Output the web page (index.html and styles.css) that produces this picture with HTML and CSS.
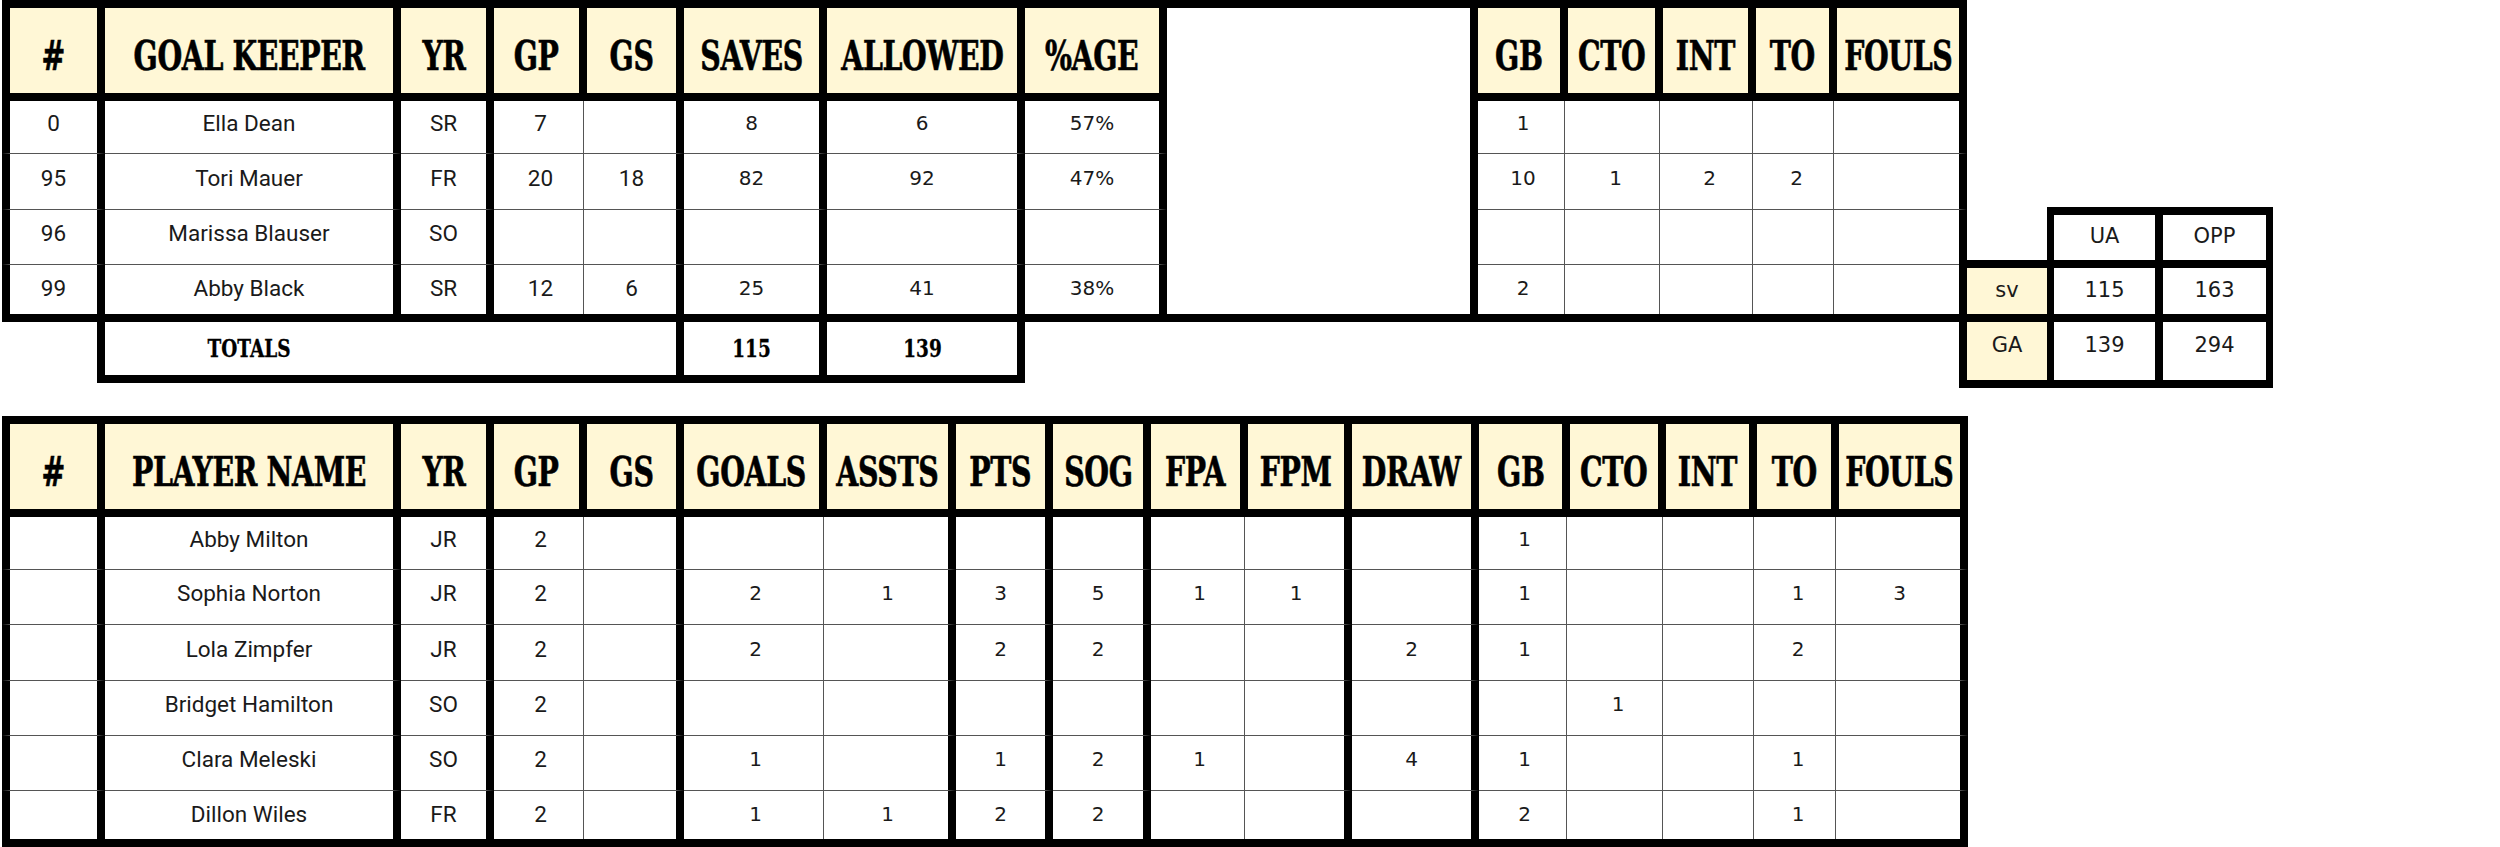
FILE: index.html
```html
<!DOCTYPE html>
<html>
<head>
<meta charset="utf-8">
<link rel="stylesheet" href="styles.css">
</head>
<body>
<div class="page">
  <div class="top">
    <div class="grid gk">
      <div class="c h first"><span>#</span></div>
      <div class="c h"><span>GOAL KEEPER</span></div>
      <div class="c h"><span>YR</span></div>
      <div class="c h"><span>GP</span></div>
      <div class="c h"><span>GS</span></div>
      <div class="c h"><span>SAVES</span></div>
      <div class="c h"><span>ALLOWED</span></div>
      <div class="c h"><span>%AGE</span></div>
      <div class="c blank"></div>
      <div class="c h"><span>GB</span></div>
      <div class="c h"><span>CTO</span></div>
      <div class="c h"><span>INT</span></div>
      <div class="c h"><span>TO</span></div>
      <div class="c h"><span>FOULS</span></div>

      <div class="c s first">0</div><div class="c s">Ella Dean</div><div class="c s">SR</div><div class="c s thin">7</div><div class="c s"></div><div class="c">8</div><div class="c">6</div><div class="c">57%</div><div class="c thin">1</div><div class="c thin"></div><div class="c thin"></div><div class="c thin"></div><div class="c"></div>

      <div class="c s first">95</div><div class="c s">Tori Mauer</div><div class="c s">FR</div><div class="c s thin">20</div><div class="c s">18</div><div class="c">82</div><div class="c">92</div><div class="c">47%</div><div class="c thin">10</div><div class="c thin">1</div><div class="c thin">2</div><div class="c thin">2</div><div class="c"></div>

      <div class="c s first">96</div><div class="c s">Marissa Blauser</div><div class="c s">SO</div><div class="c s thin"></div><div class="c s"></div><div class="c"></div><div class="c"></div><div class="c"></div><div class="c thin"></div><div class="c thin"></div><div class="c thin"></div><div class="c thin"></div><div class="c"></div>

      <div class="c s first last">99</div><div class="c s last">Abby Black</div><div class="c s last">SR</div><div class="c s thin last">12</div><div class="c s last">6</div><div class="c last">25</div><div class="c last">41</div><div class="c last">38%</div><div class="c thin last">2</div><div class="c thin last"></div><div class="c thin last"></div><div class="c thin last"></div><div class="c last"></div>

      <div class="c spacer"></div>
      <div class="c tot tot-label last"><span>TOTALS</span></div>
      <div class="c tot last"><span>115</span></div>
      <div class="c tot last"><span>139</span></div>
    </div>

    <div class="grid mini">
      <div class="m m-empty"></div>
      <div class="m m-top">UA</div>
      <div class="m m-top m-end">OPP</div>
      <div class="m m-label">sv</div>
      <div class="m">115</div>
      <div class="m m-end">163</div>
      <div class="m m-label m-low">GA</div>
      <div class="m m-low">139</div>
      <div class="m m-end m-low">294</div>
    </div>
  </div>

  <div class="grid pl">
    <div class="c h first"><span>#</span></div>
    <div class="c h"><span>PLAYER NAME</span></div>
    <div class="c h"><span>YR</span></div>
    <div class="c h"><span>GP</span></div>
    <div class="c h"><span>GS</span></div>
    <div class="c h"><span>GOALS</span></div>
    <div class="c h"><span>ASSTS</span></div>
    <div class="c h"><span>PTS</span></div>
    <div class="c h"><span>SOG</span></div>
    <div class="c h"><span>FPA</span></div>
    <div class="c h"><span>FPM</span></div>
    <div class="c h"><span>DRAW</span></div>
    <div class="c h"><span>GB</span></div>
    <div class="c h"><span>CTO</span></div>
    <div class="c h"><span>INT</span></div>
    <div class="c h"><span>TO</span></div>
    <div class="c h"><span>FOULS</span></div>

    <div class="c s first"></div><div class="c s">Abby Milton</div><div class="c s">JR</div><div class="c s thin">2</div><div class="c s"></div><div class="c thin"></div><div class="c"></div><div class="c"></div><div class="c"></div><div class="c thin"></div><div class="c"></div><div class="c"></div><div class="c thin">1</div><div class="c thin"></div><div class="c thin"></div><div class="c thin"></div><div class="c"></div>

    <div class="c s first"></div><div class="c s">Sophia Norton</div><div class="c s">JR</div><div class="c s thin">2</div><div class="c s"></div><div class="c thin">2</div><div class="c">1</div><div class="c">3</div><div class="c">5</div><div class="c thin">1</div><div class="c">1</div><div class="c"></div><div class="c thin">1</div><div class="c thin"></div><div class="c thin"></div><div class="c thin">1</div><div class="c">3</div>

    <div class="c s first"></div><div class="c s">Lola Zimpfer</div><div class="c s">JR</div><div class="c s thin">2</div><div class="c s"></div><div class="c thin">2</div><div class="c"></div><div class="c">2</div><div class="c">2</div><div class="c thin"></div><div class="c"></div><div class="c">2</div><div class="c thin">1</div><div class="c thin"></div><div class="c thin"></div><div class="c thin">2</div><div class="c"></div>

    <div class="c s first"></div><div class="c s">Bridget Hamilton</div><div class="c s">SO</div><div class="c s thin">2</div><div class="c s"></div><div class="c thin"></div><div class="c"></div><div class="c"></div><div class="c"></div><div class="c thin"></div><div class="c"></div><div class="c"></div><div class="c thin"></div><div class="c thin">1</div><div class="c thin"></div><div class="c thin"></div><div class="c"></div>

    <div class="c s first"></div><div class="c s">Clara Meleski</div><div class="c s">SO</div><div class="c s thin">2</div><div class="c s"></div><div class="c thin">1</div><div class="c"></div><div class="c">1</div><div class="c">2</div><div class="c thin">1</div><div class="c"></div><div class="c">4</div><div class="c thin">1</div><div class="c thin"></div><div class="c thin"></div><div class="c thin">1</div><div class="c"></div>

    <div class="c s first last"></div><div class="c s last">Dillon Wiles</div><div class="c s last">FR</div><div class="c s thin last">2</div><div class="c s last"></div><div class="c thin last">1</div><div class="c last">1</div><div class="c last">2</div><div class="c last">2</div><div class="c thin last"></div><div class="c last"></div><div class="c last"></div><div class="c thin last">2</div><div class="c thin last"></div><div class="c thin last"></div><div class="c thin last">1</div><div class="c last"></div>
  </div>
</div>
</body>
</html>
```

FILE: styles.css
```css
html, body {
  margin: 0;
  padding: 0;
  background: #ffffff;
}

body {
  width: 2500px;
  height: 847px;
  overflow: hidden;
  color: #111;
}

.page {
  padding-left: 2px;
}

.top {
  display: flex;
  align-items: flex-start;
}

.grid {
  display: grid;
}

.gk {
  grid-template-columns: 103px 296px 93px 93px 97px 143px 198px 142px 311px 90px 95px 93px 81px 130px;
  grid-template-rows: 101px 53px 56px 55px 57px 61px;
}

.pl {
  margin-top: 28px;
  grid-template-columns: 103px 296px 93px 93px 97px 143px 129px 97px 98px 97px 104px 127px 91px 96px 91px 82px 129px;
  grid-template-rows: 101px 53px 55px 56px 55px 55px 56px;
}

.c {
  box-sizing: border-box;
  display: flex;
  align-items: center;
  justify-content: center;
  background-color: #ffffff;
  border-right: 8px solid #000;
  border-bottom: 1px solid #555;
  padding-bottom: 8px;
  font-family: "DejaVu Sans", sans-serif;
  font-size: 20px;
  color: #1a1a1a;
  white-space: nowrap;
}

.c.s {
  font-family: Roboto, "Noto Sans", sans-serif;
  font-size: 22.5px;
}

.c.first {
  border-left: 8px solid #000;
}

.c.thin {
  border-right: 0;
  background-image: linear-gradient(#555, #555);
  background-repeat: no-repeat;
  background-size: 1px 100%;
  background-position: right 3px top 0;
}

.c.last {
  border-bottom: 8px solid #000;
  padding-bottom: 3px;
}

.c.h {
  background-color: #fff7d6;
  border-top: 8px solid #000;
  border-bottom: 8px solid #000;
  align-items: flex-end;
  padding-bottom: 13px;
  font-family: "DejaVu Serif Condensed", "DejaVu Serif", serif;
  font-stretch: condensed;
  font-weight: 700;
  font-size: 41px;
  color: #000;
  letter-spacing: -0.5px;
}

.c.h span {
  display: inline-block;
  transform: scaleX(0.77);
  -webkit-text-stroke: 0.6px #000;
}

.c.blank {
  grid-column: 9;
  grid-row: 1 / 6;
  border-top: 8px solid #000;
  border-bottom: 8px solid #000;
}

.c.spacer {
  border-bottom: 0;
  background: transparent;
}

.c.tot {
  padding-bottom: 0;
  font-family: "DejaVu Serif Condensed", "DejaVu Serif", serif;
  font-stretch: condensed;
  font-weight: 700;
  font-size: 25px;
  color: #000;
}

.c.tot span {
  display: inline-block;
  transform: scaleX(0.82);
  -webkit-text-stroke: 0.3px #000;
}

.c.tot-label {
  grid-column: span 4;
  justify-content: flex-start;
}

.tot-label span {
  width: 288px;
  text-align: center;
}

.mini {
  margin-left: -8px;
  margin-top: 207px;
  grid-template-columns: 95px 109px 110px;
  grid-template-rows: 61px 54px 66px;
}

.m {
  box-sizing: border-box;
  display: flex;
  align-items: center;
  justify-content: center;
  background: #fff;
  border-right: 8px solid #000;
  border-bottom: 8px solid #000;
  padding-bottom: 3px;
  font-family: "DejaVu Sans", sans-serif;
  font-size: 21px;
  color: #1a1a1a;
}

.m.m-empty {
  background: transparent;
  border-right-width: 7px;
}

.m.m-top {
  border-top: 8px solid #000;
}

.m.m-end {
  border-right-width: 7px;
}

.m.m-label {
  background: #fff7d6;
  border-left: 8px solid #000;
  border-right-width: 7px;
}

.m.m-low {
  padding-bottom: 12px;
}
```
